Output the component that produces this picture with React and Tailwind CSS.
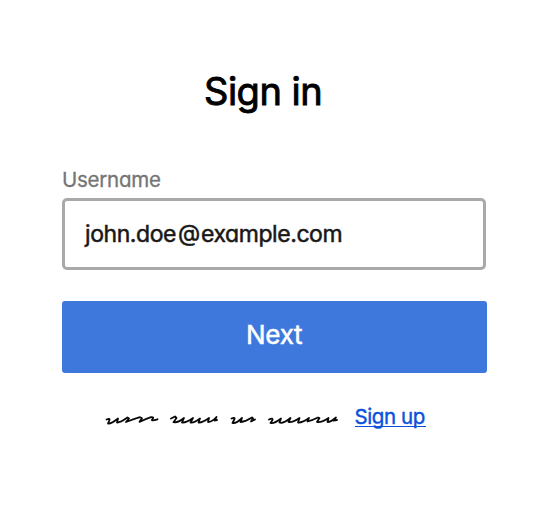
const label =
  "whitespace-nowrap font-['Inter','Open_Sans',sans-serif] [font-feature-settings:'cv11'] [paint-order:stroke] [stroke-linejoin:round]";

function Scribble() {
  return (
    <svg
      className="block h-6 w-[240px] shrink-0"
      viewBox="102 406 240 24"
      fill="none"
      stroke="#080808"
      strokeWidth="1.8"
      strokeLinecap="round"
      strokeLinejoin="round"
    >
      <path d="M106.500 419.500Q110 418 109.500 420L108 423.500Q111 424 118 418.500L117 422.500Q119.500 423 127.500 417.500L129 418.500L126 422Q134 419 140 417.200L142 418.200L139.500 421.800Q146 419 151 417.200Q155 417 152 419.500Q151 421.500 157.500 419.300" />
      <path d="M171 418.500L175 416.500L176.500 418L173.500 422.200Q178 423 184 418L182 422.500Q186 423 193 418L190.500 422.500Q194 423 200 418.500L198.500 422.500Q202 423 209 418L208 422Q212 422 216.500 417L214.500 420.500L217 420" />
      <path d="M231.500 418.500Q235 417 234.500 419L232.500 423Q236 424 242 418L240.500 422Q246 421.500 252 417.500L253 418.500L251 421.500L255 419.500" />
      <path d="M269 419.500Q273 417.500 272.500 420L270.500 423Q274 424 281 418.500L279.500 422.500Q283 424 290.500 418L288.500 422Q292 423 299.500 418L298 422.500Q302 423 309 418L307.500 421.500Q313 420 318 417.500L319.500 418L317 422Q321 423 328.500 418L327.500 422Q331 422 336 417.500L333.500 420.500L337 420" />
    </svg>
  );
}

export default function App() {
  return (
    <main className="h-[512px] w-[548px] overflow-hidden bg-white pt-[71px] pl-[62px]">
      <form className="flex w-[425px] flex-col" onSubmit={(e) => e.preventDefault()}>
        <h1 className={`${label} ml-[142px] h-10 text-[38px] leading-10 font-normal tracking-[-0.5px] text-black [-webkit-text-stroke:0.9px_#000]`}>
          Sign in
        </h1>
        <label className={`${label} mt-[59px] h-5 text-[20.5px] leading-5 font-normal tracking-[-0.25px] text-[#757575] [-webkit-text-stroke:0.3px_#757575]`}>
          Username
        </label>
        <div className="mt-2 flex h-[72px] w-[424px] items-center rounded-[5px] border-3 border-[#a9a9a9] pl-5">
          <span className={`${label} text-[23px] leading-7 font-normal tracking-[-0.42px] text-[#181818] [-webkit-text-stroke:0.5px_#181818]`}>
            john.doe<span className="relative -top-[1.5px] mr-px ml-0.5">@</span>example.com
          </span>
        </div>
        <button className="mt-[30.5px] flex h-[72px] w-[425px] items-center rounded-[3px] bg-[#3e78dc] pb-[3px] pl-[184px]">
          <span className={`${label} text-[26px] leading-8 font-normal tracking-[-0.25px] text-white [-webkit-text-stroke:0.5px_#fff]`}>
            Next
          </span>
        </button>
        <div className="mt-[33px] ml-10 flex h-6 items-start">
          <Scribble />
          <a
            href="#"
            className={`${label} ml-[12.5px] h-[21px] w-[71px] border-b border-[#0b50dc] text-[20.5px] leading-[22px] font-normal tracking-[-0.4px] text-[#0b50dc] [-webkit-text-stroke:0.4px_#0b50dc]`}
          >
            Sign up
          </a>
        </div>
      </form>
    </main>
  );
}
